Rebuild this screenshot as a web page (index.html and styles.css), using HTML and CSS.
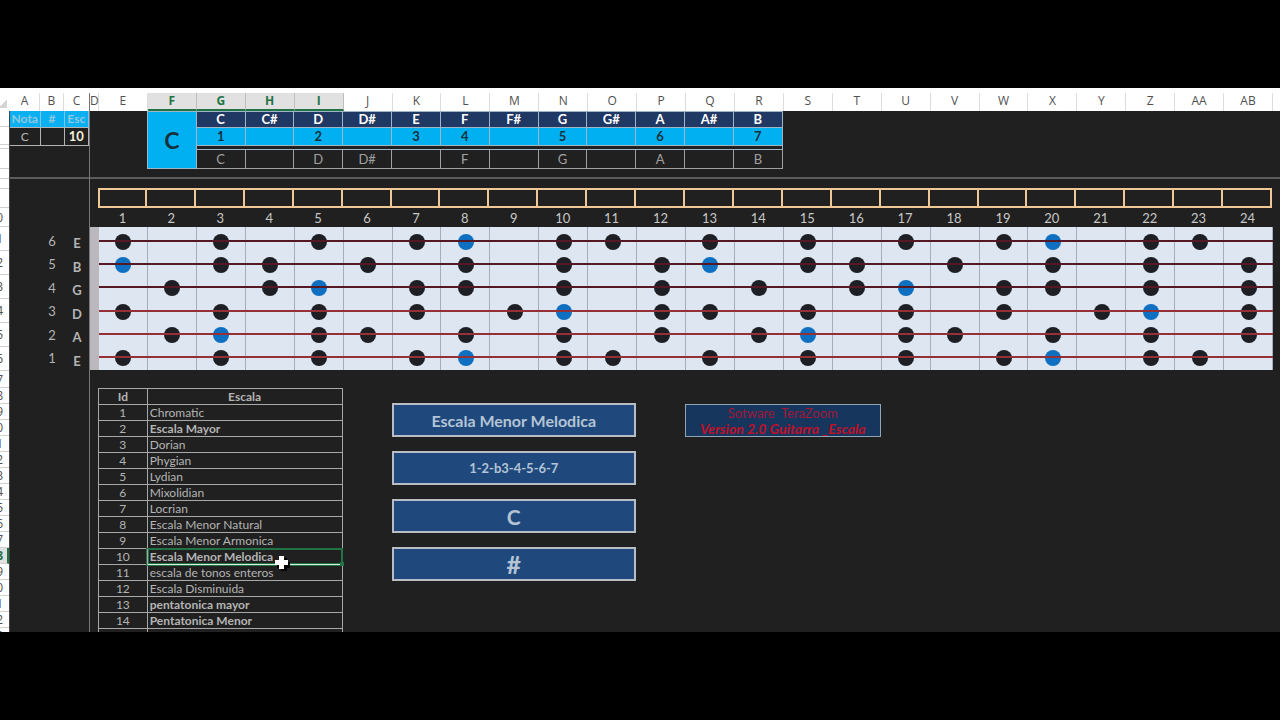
FILE: index.html
```
<!DOCTYPE html>
<html lang="es">
    <head>
        <meta charset="utf-8">
        <title>Guitarra Escala</title>
        <link rel="stylesheet" href="styles.css">
    </head>
    <body>
        <div class="sheet">
            <div class="col-heads" id="colHeads"></div>
            <div class="panes">
                <div class="row-heads" id="rowHeads"></div>

                <div class="frozen">
                    <div class="frozen-top">
                        <table class="inputs">
                            <tr><th class="col-a">Nota</th><th class="col-b">#</th><th>Esc</th></tr>
                            <tr><td>C</td><td></td><td class="esc">10</td></tr>
                        </table>
                    </div>
                    <div class="tuning" id="tuning"></div>
                </div>

                <div class="main">
                    <div class="top-pane cols">
                        <table class="notes">
                            <tr class="names">
                                <td class="root" rowspan="4">C</td>
                                <th>C</th><th>C#</th><th>D</th><th>D#</th><th>E</th><th>F</th>
                                <th>F#</th><th>G</th><th>G#</th><th>A</th><th>A#</th><th>B</th>
                            </tr>
                            <tr class="degrees">
                                <td>1</td><td></td><td>2</td><td></td><td>3</td><td>4</td>
                                <td></td><td>5</td><td></td><td>6</td><td></td><td>7</td>
                            </tr>
                            <tr class="spacer"><td colspan="12"></td></tr>
                            <tr class="used">
                                <td>C</td><td></td><td>D</td><td>D#</td><td></td><td>F</td>
                                <td></td><td>G</td><td></td><td>A</td><td></td><td>B</td>
                            </tr>
                        </table>
                    </div>

                    <div class="markers cols" id="markers"></div>
                    <div class="fret-numbers cols" id="fretNumbers"></div>
                    <div class="board" id="board"></div>

                    <div class="bottom cols">
                        <table class="scales">
                            <thead>
                                <tr><th class="id">Id</th><th>Escala</th></tr>
                            </thead>
                            <tbody>
                                <tr><td>1</td><td>Chromatic</td></tr>
                                <tr class="strong"><td>2</td><td>Escala Mayor</td></tr>
                                <tr><td>3</td><td>Dorian</td></tr>
                                <tr><td>4</td><td>Phygian</td></tr>
                                <tr><td>5</td><td>Lydian</td></tr>
                                <tr><td>6</td><td>Mixolidian</td></tr>
                                <tr><td>7</td><td>Locrian</td></tr>
                                <tr><td>8</td><td>Escala Menor Natural</td></tr>
                                <tr><td>9</td><td>Escala Menor Armonica</td></tr>
                                <tr class="strong">
                                    <td>10</td>
                                    <td class="active">Escala Menor Melodica
                                        <svg class="cursor" width="16" height="16" viewBox="0 0 16 16">
                                            <path d="M7 3h6v4h3v6h-3v3H7v-3H3V7h4z" fill="#000"/>
                                            <path d="M5 1h5v4h4v5h-4v4H5v-4H1V5h4z" fill="#fff"/>
                                        </svg>
                                    </td>
                                </tr>
                                <tr><td>11</td><td>escala de tonos enteros</td></tr>
                                <tr><td>12</td><td>Escala Disminuida</td></tr>
                                <tr class="strong"><td>13</td><td>pentatonica mayor</td></tr>
                                <tr class="strong"><td>14</td><td>Pentatonica Menor</td></tr>
                                <tr><td></td><td></td></tr>
                            </tbody>
                        </table>
                        <div class="summary">
                            <div class="box box-name">Escala Menor Melodica</div>
                            <div class="box box-formula">1-2-b3-4-5-6-7</div>
                            <div class="box box-note">C</div>
                            <div class="box box-sign">#</div>
                        </div>
                        <div class="credit">
                            <div>Sotware&nbsp; TeraZoom</div>
                            <div class="version">Version 2.0 Guitarra _Escala</div>
                        </div>
                    </div>
                </div>
            </div>
        </div>
        <script src="script.js"></script>
    </body>
</html>
```
FILE: styles.css
```
*{
    box-sizing: border-box;
}
body{
    margin: 0;
    height: 100vh;
    padding: 88px 0;
    background-color: #000;
    font-family: Lato, "Open Sans", sans-serif;
    font-size: 12px;
    color: #b4b4b4;
}
.sheet{
    height: 100%;
    overflow: hidden;
    background-color: #202020;
}
table{
    border-collapse: collapse;
    table-layout: fixed;
    width: 100%;
}
th, td{
    padding: 0;
    text-align: center;
}

/* column letters */
.col-heads{
    display: grid;
    grid-template-columns: 10px 30px 24px 26px 9px repeat(24, 1fr) 7px;
    height: 23px;
    padding-top: 5px;
    background-color: #fff;
    font-family: "Open Sans", sans-serif;
    line-height: 16px;
    text-align: center;
    color: #505050;
}
.col-heads div{
    border-right: 1px solid #dcdcdc;
}
.col-heads .c-line{
    border-right-color: #777;
}
.col-heads .picked{
    background-color: #e1e1e1;
    border-right-color: #bdbdbd;
    border-bottom: 2px solid #217346;
    font-weight: bold;
    color: #217346;
}
.col-heads .corner{
    border-right: 0;
    background: linear-gradient(135deg, #fff 50%, #d4d4d4 50%);
    margin: 5px 3px 3px 0;
}

.panes{
    display: grid;
    grid-template-columns: 10px 80px 1fr;
}

/* row numbers, only the last digit is in view */
.row-heads{
    overflow: hidden;
    border-right: 1px solid #444;
    background-color: #fff;
    font-family: "Open Sans", sans-serif;
    color: #505050;
}
.row-heads div{
    display: flex;
    align-items: center;
    justify-content: flex-end;
    padding-right: 6px;
    border-bottom: 1px solid #d0d0d0;
}
.row-heads .picked{
    background-color: #e1e1e1;
    border-right: 2px solid #217346;
    padding-right: 4px;
    font-weight: bold;
    color: #217346;
}

/* frozen columns A to C */
.frozen{
    border-right: 1px solid #777;
}
.frozen-top{
    height: 68px;
    border-bottom: 2px solid #5c5c5c;
}
.inputs .col-a{
    width: 30px;
}
.inputs .col-b{
    width: 24px;
}
.inputs th{
    height: 16px;
    border-right: 1px solid #7fc4e4;
    background-color: #0ab0f2;
    color: #8fc9e0;
    line-height: 15px;
}
.inputs td{
    height: 18px;
    border: 1px solid #b4b4b4;
    border-left: 0;
}
.inputs .esc{
    font-size: 13px;
    font-weight: bold;
    color: #f4f0dc;
}
.tuning{
    display: grid;
    grid-template-rows: repeat(6, 1fr);
    height: 143px;
    margin-top: 48px;
    padding-top: 2px;
}
.tuning div{
    display: grid;
    grid-template-columns: 24px 26px;
    padding-left: 30px;
    align-items: center;
    text-align: center;
    font-size: 13px;
}
.tuning b{
    padding-top: 5px;
}

/* 24 fret columns after the narrow D column */
.cols{
    display: grid;
    grid-template-columns: repeat(24, 1fr);
    padding: 0 8px;
}
.top-pane{
    height: 68px;
    border-bottom: 2px solid #5c5c5c;
}
.notes{
    grid-column: 2 / 15;
    align-self: start;
    font-size: 13px;
    line-height: 15px;
}
.notes th, .notes td{
    border: 1px solid #9fb4c4;
}
.names th{
    height: 16px;
    background-color: #1f3864;
    color: #fff;
}
.notes .root{
    background-color: #00b0f0;
    font-size: 23px;
    font-weight: bold;
    color: #16303c;
}
.degrees td{
    height: 18px;
    background-color: #00b0f0;
    font-weight: bold;
    color: #16303c;
}
.spacer td{
    height: 4px;
    line-height: 0;
}
.used td{
    height: 19px;
    border-color: #a0a0a0;
    color: #a0a0a0;
}
.markers{
    height: 20px;
    margin-top: 9px;
}
.markers div{
    border: 2px solid #f0c896;
    border-left-width: 0;
}
.markers div:first-child{
    border-left-width: 2px;
}
.fret-numbers{
    height: 19px;
    line-height: 21px;
    text-align: center;
    font-size: 13px;
    color: #c8c8c8;
}

/* fretboard */
.board{
    display: grid;
    grid-template-rows: repeat(6, 1fr);
    height: 143px;
    margin-right: 7px;
    padding-top: 3px;
    border-left: 9px solid #bab8bc;
    background-color: #dde6f1;
    position: relative;
}
.board .frets{
    position: absolute;
    inset: 0;
    display: grid;
    grid-template-columns: repeat(24, 1fr);
}
.board .frets i{
    border-right: 1px solid #a4adbb;
}
.string{
    position: relative;
    display: grid;
    grid-template-columns: repeat(24, 1fr);
    place-items: center;
}
.string::after{
    content: "";
    position: absolute;
    left: 0;
    right: 0;
    top: calc(50% - 2px);
    height: 2px;
    background-color: #561825;
}
.string.wound::after{
    background-color: #943036;
}
.dot{
    width: 16px;
    height: 16px;
    border-radius: 50%;
    background-color: #1d1f24;
}
.dot.tonic{
    background-color: #0f6fc0;
}

.bottom{
    margin-top: 18px;
    align-items: start;
}
.scales{
    grid-column: 1 / 6;
}
.scales .id{
    width: 20%;
}
.scales th, .scales td{
    height: 16px;
    line-height: 15px;
    border: 1px solid #a8a8a8;
}
.scales td + td{
    padding-left: 2px;
    text-align: left;
}
.scales .strong td + td{
    font-weight: bold;
}
.scales .active{
    position: relative;
    outline: 1px solid #217346;
    box-shadow: inset 0 0 0 1px #217346;
    border-color: #d8eee0;
}
.active::after{
    content: "";
    position: absolute;
    right: -2px;
    bottom: -2px;
    width: 4px;
    height: 4px;
    background-color: #217346;
}
.cursor{
    position: absolute;
    left: 126px;
    top: 6px;
}
.summary{
    grid-column: 7 / 12;
    display: grid;
    gap: 14px;
    padding-top: 15px;
}
.box{
    height: 34px;
    border: 2px solid #b8bcc4;
    background-color: #1f497d;
    line-height: 31px;
    text-align: center;
    font-weight: bold;
    color: #b4c4d4;
}
.box-name{
    font-size: 16px;
}
.box-formula{
    font-size: 13px;
}
.box-note{
    font-size: 21px;
}
.box-sign{
    font-size: 25px;
}
.credit{
    grid-column: 13 / 17;
    height: 33px;
    margin-top: 16px;
    border: 1px solid #8fa4b4;
    background-color: #17365d;
    font-size: 13px;
    line-height: 16px;
    text-align: center;
    color: #a01838;
}
.credit .version{
    font-size: 14px;
    font-weight: bold;
    font-style: italic;
    color: #c01028;
}
```
FILE: script.js
```
var NOTES = ["C", "C#", "D", "D#", "E", "F", "F#", "G", "G#", "A", "A#", "B"];
var FRETS = 24;
var scale = ["C", "D", "D#", "F", "G", "A", "B"];
var root = "C";
var strings = ["E", "B", "G", "D", "A", "E"];

function add(parent, tag, cls, text){
    var el = document.createElement(tag);
    if (cls) el.className = cls;
    if (text) el.textContent = text;
    parent.appendChild(el);
    return el;
}

function fillHeads(){
    var heads = document.getElementById("colHeads");
    add(heads, "div", "corner");
    for (var i = 0; i < 28; i++){
        var letter = i < 26 ? String.fromCharCode(65 + i) : "A" + String.fromCharCode(39 + i);
        var cls = "FGHI".indexOf(letter) >= 0 ? "picked" : "";
        if (letter == "C") cls = "c-line";
        add(heads, "div", cls, letter);
    }

    var rows = document.getElementById("rowHeads");
    // rows above 10 have nothing in view
    [16, 18, 4, 20, 10, 10, 19].forEach(function(h){
        add(rows, "div").style.height = h + "px";
    });
    for (var n = 10; n <= 33; n++){
        var h = 16;
        if (n == 10) h = 19;
        else if (n < 17) h = 24;
        else if (n == 17) h = 17;
        add(rows, "div", n == 28 ? "picked" : "", String(n)).style.height = h + "px";
    }
}

function fillBoard(){
    var markers = document.getElementById("markers");
    var numbers = document.getElementById("fretNumbers");
    var board = document.getElementById("board");
    var tuning = document.getElementById("tuning");
    var frets = add(board, "div", "frets");
    for (var f = 1; f <= FRETS; f++){
        add(markers, "div");
        add(numbers, "div", "", String(f));
        add(frets, "i");
    }
    strings.forEach(function(open, s){
        var label = add(tuning, "div");
        add(label, "span", "", String(6 - s));
        add(label, "b", "", open);

        var row = add(board, "div", "string" + (s > 2 ? " wound" : ""));
        for (var f = 1; f <= FRETS; f++){
            var note = NOTES[(NOTES.indexOf(open) + f) % 12];
            var cell = add(row, "div");
            if (scale.indexOf(note) >= 0){
                add(cell, "div", note == root ? "dot tonic" : "dot");
            }
        }
    });
}

fillHeads();
fillBoard();
```
